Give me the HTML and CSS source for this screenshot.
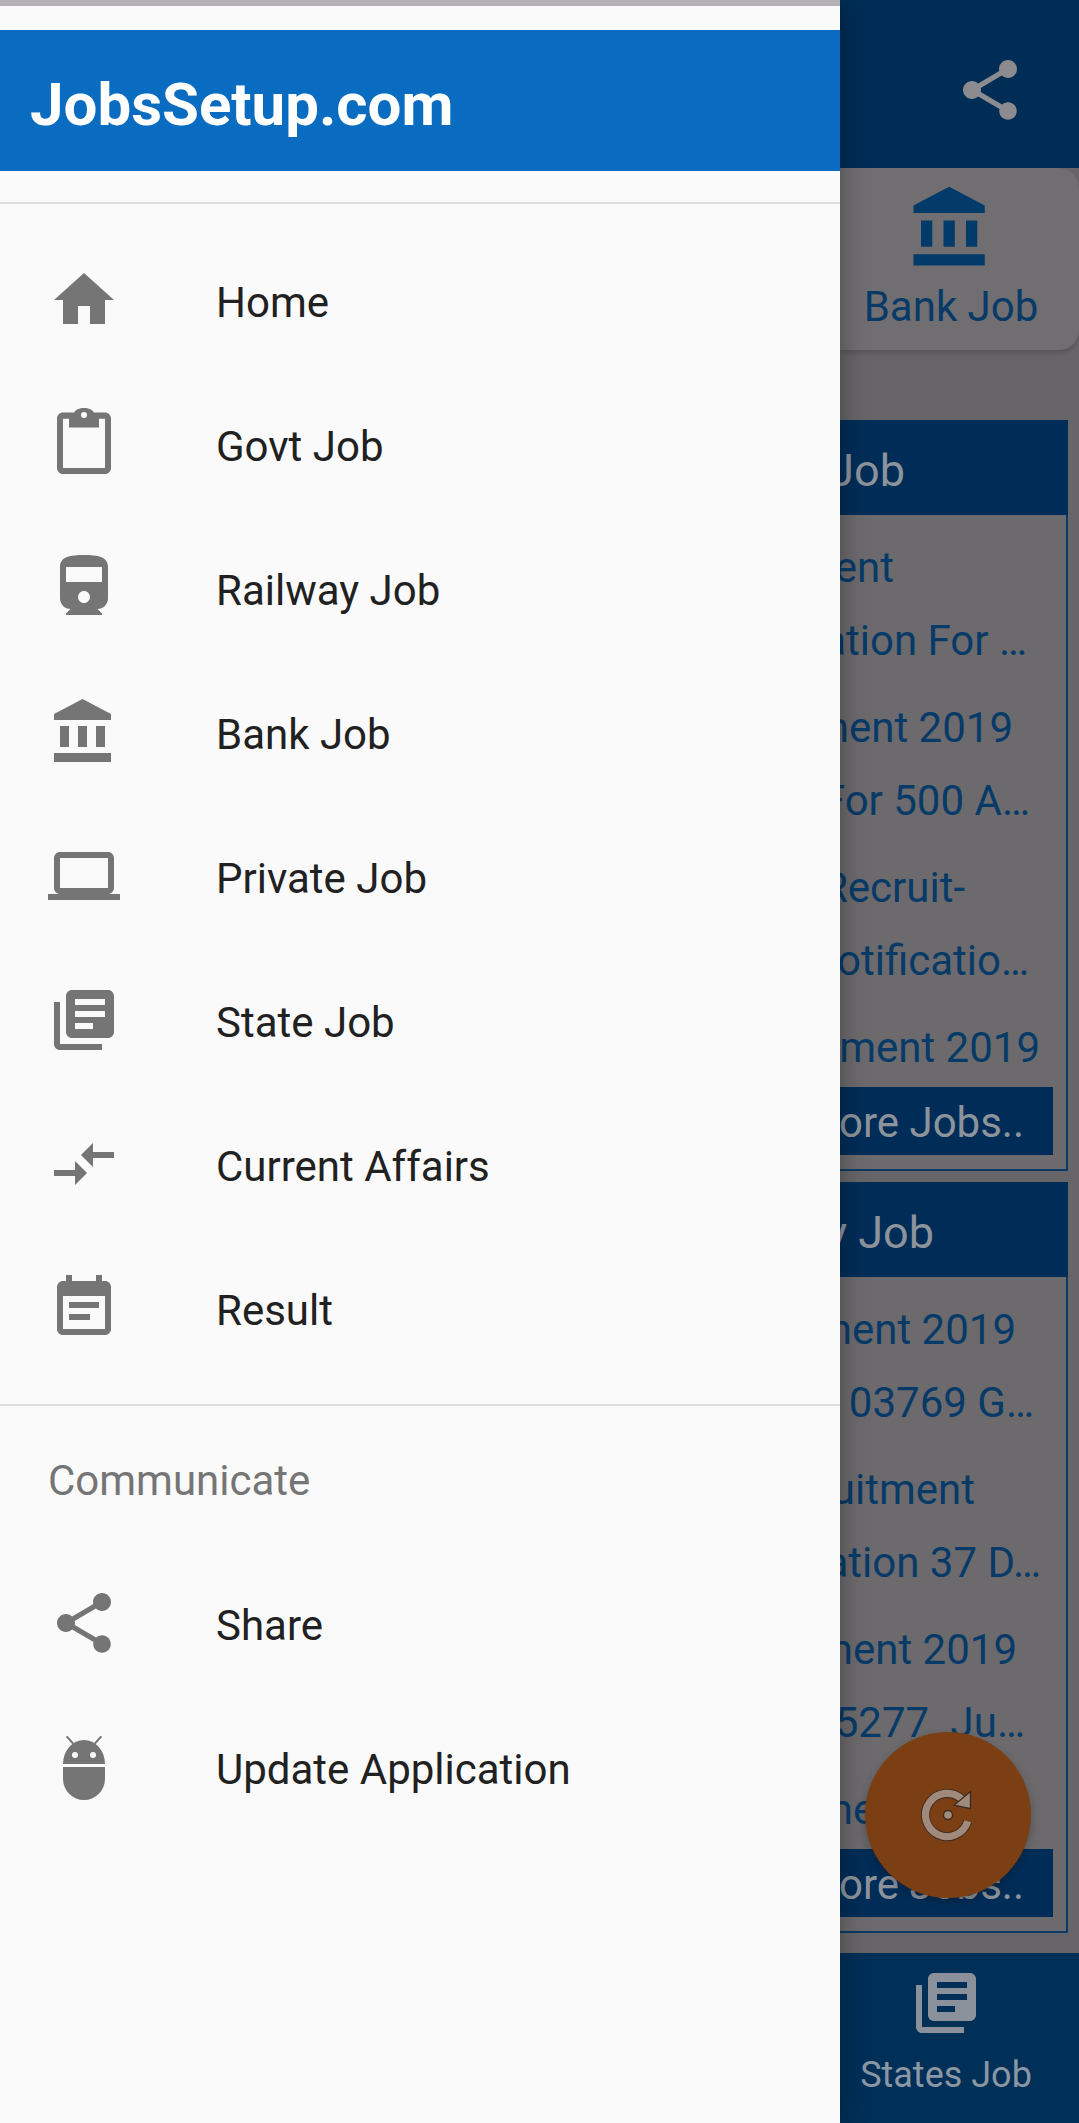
FILE: index.html
```html
<!DOCTYPE html>
<html lang="en">
<head>
    <meta charset="UTF-8">
    <meta name="viewport" content="width=device-width, initial-scale=1.0">
    <title>JobsSetup.com</title>
    <link rel="stylesheet" href="styles.css">
</head>
<body>
    <div class="page">
        <!-- Dimmed screen behind the drawer -->
        <header class="appbar">
            <svg class="icon share-top" viewBox="0 0 24 24"><path d="M18 16.08c-.76 0-1.44.3-1.96.77L8.91 12.7c.05-.23.09-.46.09-.7s-.04-.47-.09-.7l7.05-4.11c.54.5 1.25.81 2.04.81 1.66 0 3-1.34 3-3s-1.34-3-3-3-3 1.34-3 3c0 .24.04.47.09.7L8.04 9.81C7.5 9.31 6.79 9 6 9c-1.66 0-3 1.34-3 3s1.34 3 3 3c.79 0 1.5-.31 2.04-.81l7.12 4.16c-.05.21-.08.43-.08.65 0 1.61 1.31 2.92 2.92 2.92 1.61 0 2.92-1.31 2.92-2.92s-1.31-2.92-2.92-2.92z"/></svg>
        </header>

        <div class="tab-card">
            <svg class="tab-icon" viewBox="0 0 24 24"><path d="M4 10v7h3v-7H4zm6 0v7h3v-7h-3zM2 22h19v-3H2v3zm14-12v7h3v-7h-3zm-4.5-9L2 6v2h19V6l-9.5-5z"/></svg>
            <div class="tab-label">Bank Job</div>
        </div>

        <section class="job-card">
            <h2 class="job-title e163">Job</h2>
            <div class="job-body">
                <div class="job-item">
                    <p class="e174">ent</p>
                    <p class="e41">ation For …</p>
                </div>
                <div class="job-item">
                    <p class="e55">nent 2019</p>
                    <p class="e38">For 500 A…</p>
                </div>
                <div class="job-item">
                    <p class="e103">Recruit-</p>
                    <p class="e39">otificatio…</p>
                </div>
                <div class="job-item">
                    <p class="e28">ment 2019</p>
                </div>
                <div class="more-btn">ore Jobs..</div>
            </div>
        </section>

        <section class="job-card">
            <h2 class="job-title e134">y Job</h2>
            <div class="job-body">
                <div class="job-item">
                    <p class="e52">nent 2019</p>
                    <p class="e34">03769 G…</p>
                </div>
                <div class="job-item">
                    <p class="e93">uitment</p>
                    <p class="e27">ation 37 D…</p>
                </div>
                <div class="job-item">
                    <p class="e51">nent 2019</p>
                    <p class="e43">35277 .Ju…</p>
                </div>
                <div class="job-item">
                    <p class="e51">nent 2019</p>
                </div>
                <div class="more-btn">ore Jobs..</div>
            </div>
        </section>

        <footer class="bottom-bar">
            <svg class="icon" viewBox="0 0 24 24"><path d="M4 6H2v14c0 1.1.9 2 2 2h14v-2H4V6zm16-4H8c-1.1 0-2 .9-2 2v12c0 1.1.9 2 2 2h12c1.1 0 2-.9 2-2V4c0-1.1-.9-2-2-2zm-1 9H9V9h10v2zm-4 4H9v-2h6v2zm4-8H9V5h10v2z"/></svg>
            <div class="bottom-label">States Job</div>
        </footer>
    </div>

    <!-- Refresh button -->
    <div class="fab">
        <svg class="fab-icon" viewBox="0 0 60 60">
            <path class="ring-edge" d="M46 13A24 24 0 1 0 52 37"/>
            <path class="ring" d="M46 13A24 24 0 1 0 52 37"/>
            <path class="arrow" d="M37 19L55 4L55 23z"/>
            <circle class="dot" cx="30" cy="30" r="5"/>
        </svg>
    </div>

    <!-- Navigation drawer -->
    <aside class="drawer">
        <div class="status-strip"></div>
        <div class="brand">JobsSetup.com</div>
        <nav class="menu">
            <a class="menu-item">
                <svg class="icon" viewBox="0 0 24 24"><path d="M10 20v-6h4v6h5v-8h3L12 3 2 12h3v8z"/></svg>
                <span>Home</span>
            </a>
            <a class="menu-item">
                <svg class="icon" viewBox="0 0 24 24"><path fill-rule="evenodd" d="M19 1.5h-3.7C14.9.6 13.6 0 12 0s-2.9.6-3.3 1.5H5c-1.1 0-2 .9-2 2V20c0 1.1.9 2 2 2h14c1.1 0 2-.9 2-2V3.5c0-1.1-.9-2-2-2zM12 1.3a1 1 0 1 1 0 2 1 1 0 0 1 0-2zM19 20H5V3.6h2v2.9h10V3.6h2z"/></svg>
                <span>Govt Job</span>
            </a>
            <a class="menu-item">
                <svg class="icon" viewBox="0 0 24 24"><path d="M4 15.5C4 17.43 5.57 19 7.5 19L6 20.5v.5h12v-.5L16.5 19c1.93 0 3.5-1.57 3.5-3.5V5c0-3.5-3.58-4-8-4s-8 .5-8 4v10.5zm8 1.5c-1.1 0-2-.9-2-2s.9-2 2-2 2 .9 2 2-.9 2-2 2zm6-7H6V5h12v5z"/></svg>
                <span>Railway Job</span>
            </a>
            <a class="menu-item">
                <svg class="icon" viewBox="0 0 24 24"><path d="M4 10v7h3v-7H4zm6 0v7h3v-7h-3zM2 22h19v-3H2v3zm14-12v7h3v-7h-3zm-4.5-9L2 6v2h19V6l-9.5-5z"/></svg>
                <span>Bank Job</span>
            </a>
            <a class="menu-item">
                <svg class="icon" viewBox="0 0 24 24"><path d="M20 18c1.1 0 1.99-.9 1.99-2L22 6c0-1.1-.9-2-2-2H4c-1.1 0-2 .9-2 2v10c0 1.1.9 2 2 2H0v2h24v-2h-4zM4 6h16v10H4V6z"/></svg>
                <span>Private Job</span>
            </a>
            <a class="menu-item">
                <svg class="icon" viewBox="0 0 24 24"><path d="M4 6H2v14c0 1.1.9 2 2 2h14v-2H4V6zm16-4H8c-1.1 0-2 .9-2 2v12c0 1.1.9 2 2 2h12c1.1 0 2-.9 2-2V4c0-1.1-.9-2-2-2zm-1 9H9V9h10v2zm-4 4H9v-2h6v2zm4-8H9V5h10v2z"/></svg>
                <span>State Job</span>
            </a>
            <a class="menu-item">
                <svg class="icon" viewBox="0 0 24 24"><path d="M9.01 14H2v2h7.01v3L13 15l-3.99-4v3zm5.98-1v-3H22V8h-7.01V5L11 9l3.99 4z"/></svg>
                <span>Current Affairs</span>
            </a>
            <a class="menu-item">
                <svg class="icon" viewBox="0 0 24 24"><path d="M17 10H7v2h10v-2zm2-7h-1V1h-2v2H8V1H6v2H5c-1.11 0-1.99.9-1.99 2L3 19c0 1.1.89 2 2 2h14c1.1 0 2-.9 2-2V5c0-1.1-.9-2-2-2zm0 16H5V8h14v11zm-5-5H7v2h7v-2z"/></svg>
                <span>Result</span>
            </a>
        </nav>
        <div class="menu-group">
            <div class="group-label">Communicate</div>
            <a class="menu-item">
                <svg class="icon" viewBox="0 0 24 24"><path d="M18 16.08c-.76 0-1.44.3-1.96.77L8.91 12.7c.05-.23.09-.46.09-.7s-.04-.47-.09-.7l7.05-4.11c.54.5 1.25.81 2.04.81 1.66 0 3-1.34 3-3s-1.34-3-3-3-3 1.34-3 3c0 .24.04.47.09.7L8.04 9.81C7.5 9.31 6.79 9 6 9c-1.66 0-3 1.34-3 3s1.34 3 3 3c.79 0 1.5-.31 2.04-.81l7.12 4.16c-.05.21-.08.43-.08.65 0 1.61 1.31 2.92 2.92 2.92 1.61 0 2.92-1.31 2.92-2.92s-1.31-2.92-2.92-2.92z"/></svg>
                <span>Share</span>
            </a>
            <a class="menu-item">
                <svg class="icon" viewBox="0 0 24 24">
                    <path d="M5 11a7 8 0 0 1 14 0zM5 12h14v4a7 7 0 0 1-14 0zM9 7a1 1 0 1 0 0 2 1 1 0 0 0 0-2zM15 7a1 1 0 1 0 0 2 1 1 0 0 0 0-2z" fill-rule="evenodd"/>
                    <path class="antenna" d="M6.2 1.8L8.4 4.2M17.8 1.8L15.6 4.2"/>
                </svg>
                <span>Update Application</span>
            </a>
        </div>
    </aside>
</body>
</html>
```

FILE: styles.css
```css
body {
    margin: 0;
    position: relative;
    width: 1079px;
    height: 2123px;
    overflow: hidden;
    font-family: Roboto, sans-serif;
    background-color: #676567;
}
p, h2 {
    margin: 0;
    font-weight: 400;
}
.icon {
    display: block;
    width: 72px;
    height: 72px;
    flex-shrink: 0;
    fill: #757575;
}

/* Screen behind the drawer, all colours already dimmed */
.page {
    display: flex;
    flex-direction: column;
    height: 2123px;
    margin-left: 840px;
}
.appbar {
    display: flex;
    justify-content: flex-end;
    height: 168px;
    background-color: #002d56;
}
.share-top {
    margin: 54px 53px 0 0;
    fill: #8b8b90;
}
.tab-card {
    display: flex;
    flex-direction: column;
    align-items: center;
    height: 182px;
    padding-right: 17px;
    box-sizing: border-box;
    background-color: #706e70;
    border-radius: 0 20px 20px 0;
    box-shadow: 0 3px 5px rgba(0, 0, 0, 0.15);
}
.tab-icon {
    width: 90px;
    height: 90px;
    margin-top: 15px;
    fill: #023a6a;
}
.tab-label {
    margin-top: 8px;
    font-size: 42px;
    line-height: 52px;
    white-space: nowrap;
    color: #083a68;
}
.job-card {
    margin-right: 11px;
    margin-bottom: 11px;
}
.tab-card + .job-card {
    margin-top: 70px;
}
.job-title {
    height: 95px;
    font-size: 45px;
    line-height: 101px;
    white-space: nowrap;
    color: #8c939b;
    background-color: #002d58;
}
.job-body {
    display: flex;
    flex-direction: column;
    padding: 16px 0 14px;
    background-color: #6c6a6c;
    border-right: 2px solid #0a3a68;
    border-bottom: 2px solid #0a3a68;
}
.job-item {
    margin-bottom: 14px;
    font-size: 42px;
    line-height: 73px;
    white-space: nowrap;
    color: #083a68;
}
.job-item:nth-last-child(2) {
    margin-bottom: 3px;
}
.job-title, .job-item p {
    display: flex;
    justify-content: flex-end;
}
.more-btn {
    display: flex;
    justify-content: flex-end;
    height: 68px;
    margin-right: 13px;
    padding-right: 29px;
    font-size: 42px;
    line-height: 72px;
    white-space: nowrap;
    color: #8c939b;
    background-color: #002d58;
}

/* Where each clipped line ends, measured from the card's right edge */
.e27 { padding-right: 25px; }
.e28 { padding-right: 26px; }
.e34 { padding-right: 32px; }
.e38 { padding-right: 36px; }
.e39 { padding-right: 37px; }
.e41 { padding-right: 39px; }
.e43 { padding-right: 41px; }
.e51 { padding-right: 49px; }
.e52 { padding-right: 50px; }
.e55 { padding-right: 53px; }
.e93 { padding-right: 91px; }
.e103 { padding-right: 101px; }
.e174 { padding-right: 172px; }
.job-title.e163 { padding-right: 163px; }
.job-title.e134 { padding-right: 134px; }

.bottom-bar {
    display: flex;
    flex-direction: column;
    align-items: center;
    height: 170px;
    margin-top: auto;
    padding: 14px 27px 0 0;
    box-sizing: border-box;
    background-color: #002f58;
}
.bottom-bar .icon {
    fill: #8a919a;
}
.bottom-label {
    margin-top: 12px;
    font-size: 36px;
    line-height: 48px;
    white-space: nowrap;
    color: #8a97a4;
}

.fab {
    position: absolute;
    left: 865px;
    top: 1732px;
    display: flex;
    align-items: center;
    justify-content: center;
    width: 166px;
    height: 166px;
    border-radius: 50%;
    background-color: #7c3f14;
    box-shadow: 0 4px 10px rgba(0, 0, 0, 0.25);
}
.fab-icon {
    width: 54px;
    height: 54px;
}
.ring-edge {
    fill: none;
    stroke: #3d2a20;
    stroke-width: 10;
}
.ring {
    fill: none;
    stroke: #a08a7c;
    stroke-width: 8;
}
.arrow {
    fill: #a08a7c;
    stroke: #3d2a20;
    stroke-width: 1.5;
}
.dot {
    fill: #a08a7c;
    stroke: #3d2a20;
    stroke-width: 1.5;
}

/* Navigation drawer */
.drawer {
    position: absolute;
    left: 0;
    top: 0;
    width: 840px;
    height: 2123px;
    background-color: #fafafa;
    box-shadow: 0 0 26px rgba(0, 0, 0, 0.35);
}
.status-strip {
    height: 6px;
    margin-bottom: 24px;
    background-color: #b4b1b5;
}
.brand {
    height: 141px;
    padding: 8px 0 0 30px;
    box-sizing: border-box;
    font-size: 60px;
    font-weight: 700;
    line-height: 133px;
    color: #fff;
    background-color: #096cc0;
}
.menu {
    margin-top: 31px;
    padding: 24px 0;
    border-top: 2px solid #dedede;
    border-bottom: 2px solid #dedede;
}
.menu-item {
    display: flex;
    align-items: center;
    height: 144px;
    padding-left: 48px;
    font-size: 42px;
    color: #212121;
}
.menu-item span {
    margin-left: 96px;
    padding-top: 4px;
}
.group-label {
    height: 145px;
    padding: 4px 0 0 48px;
    box-sizing: border-box;
    font-size: 42px;
    line-height: 141px;
    color: #757575;
}
.antenna {
    fill: none;
    stroke: #757575;
    stroke-width: 0.7;
}
```
